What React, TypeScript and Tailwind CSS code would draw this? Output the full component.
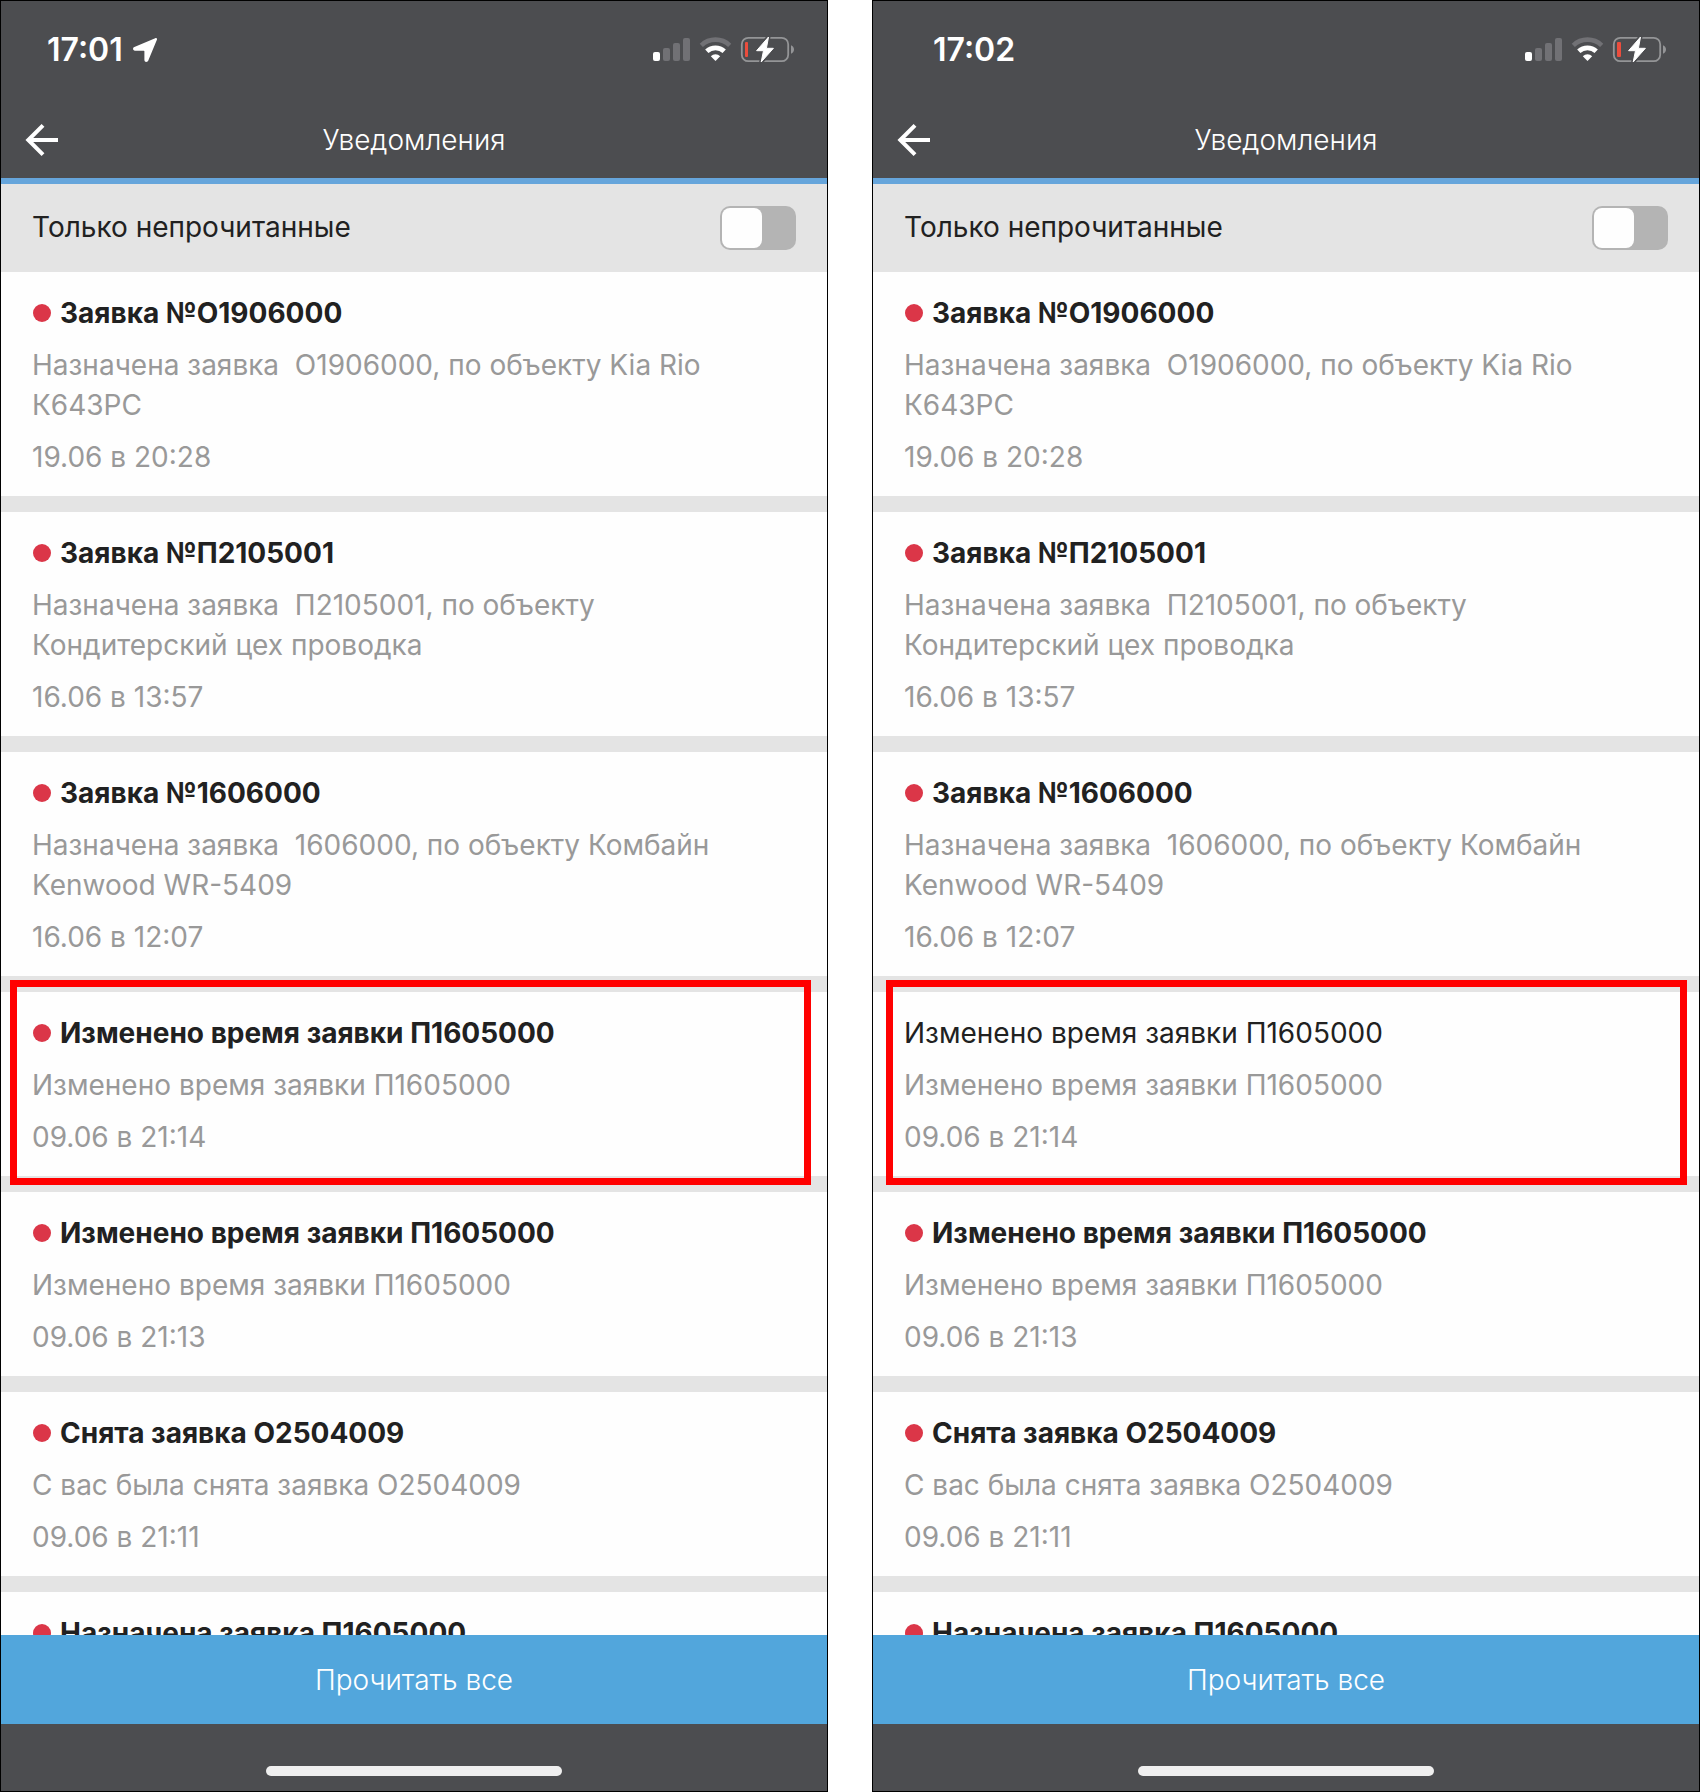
type Notice = { title: string; body?: string; time?: string; read?: boolean; marked?: boolean };

const NOTICES: Notice[] = [
  { title: 'Заявка №О1906000', body: 'Назначена заявка  О1906000, по объекту Kia Rio К643РС', time: '19.06 в 20:28' },
  { title: 'Заявка №П2105001', body: 'Назначена заявка  П2105001, по объекту Кондитерский цех проводка', time: '16.06 в 13:57' },
  { title: 'Заявка №1606000', body: 'Назначена заявка  1606000, по объекту Комбайн Kenwood WR-5409', time: '16.06 в 12:07' },
  { title: 'Изменено время заявки П1605000', body: 'Изменено время заявки П1605000', time: '09.06 в 21:14', marked: true },
  { title: 'Изменено время заявки П1605000', body: 'Изменено время заявки П1605000', time: '09.06 в 21:13' },
  { title: 'Снята заявка О2504009', body: 'С вас была снята заявка О2504009', time: '09.06 в 21:11' },
  { title: 'Назначена заявка П1605000' },
];

const NOTICES_AFTER: Notice[] = NOTICES.map((n) => (n.marked ? { ...n, read: true } : n));

function StatusIcons({ charge }: { charge: number }) {
  return (
    <svg width="141" height="28" viewBox="0 0 141 28" fill="none" aria-hidden="true">
      <rect x="0" y="16" width="7" height="9" rx="2" fill="#fff" />
      <rect x="10" y="12" width="7" height="13" rx="2" fill="#717175" />
      <rect x="20" y="7" width="7" height="18" rx="2" fill="#717175" />
      <rect x="30" y="2" width="7" height="23" rx="2" fill="#717175" />
      <path d="M48.3 9.3A20.500 20.500 0 0 1 76.700 9.3" stroke="#717175" strokeWidth="4.6" />
      <path d="M53.800 15.3A12.800 12.800 0 0 1 71.200 15.3" stroke="#fff" strokeWidth="4.8" />
      <path d="M62.500 25L57.800 20.200A6.800 6.800 0 0 1 67.200 20.200Z" fill="#fff" />
      <rect x="88.800" y="1.800" width="46.400" height="23.400" rx="6.500" stroke="#949597" strokeWidth="1.8" />
      <path d="M138 9.300C140 10 141 11.700 141 13.500S140 17 138 17.700Z" fill="#949597" />
      <rect x="92" y="6" width={charge} height="15" rx="1" fill="#eb4d3d" />
      <path
        d="M115.500 1L103.600 14.700H110.500L108.200 26L120.400 12.300H113.400Z"
        fill="#fff" stroke="#4c4d50" strokeWidth="4" strokeLinejoin="round"
      />
      <path
        d="M115.500 1L103.600 14.700H110.500L108.200 26L120.400 12.300H113.400Z"
        fill="#fff" stroke="#fff" strokeWidth="1" strokeLinejoin="round"
      />
    </svg>
  );
}

function LocationArrow() {
  return (
    <svg width="24" height="24" viewBox="0 0 24 24" fill="#fff" aria-hidden="true">
      <path d="M22.200 0.200C23.500 -0.300 24.400 0.700 23.800 2L15.300 22.500C14.400 24.700 11.400 24.300 11.400 22V13.300Q11.400 12.700 10.800 12.700H2C-0.300 12.700 -0.700 9.800 1.400 8.900Z" />
    </svg>
  );
}

function NoticeCard({ notice, highlight }: { notice: Notice; highlight: string }) {
  return (
    <li className="relative bg-[#fefefe] px-[31px] pt-[21px] pb-[19px]">
      <article className="flex flex-col gap-3">
        <div className="flex items-center gap-2">
          {!notice.read && (
            <span className="flex w-5 shrink-0 justify-center">
              <span className="size-[18px] rounded-full bg-[#db3648]" />
            </span>
          )}
          <h2 className={notice.read ? 'font-normal text-[#212121]' : 'font-bold text-[#212121]'}>{notice.title}</h2>
        </div>
        {notice.body && <p className="whitespace-pre-wrap pr-8 text-[#999999]">{notice.body}</p>}
        {notice.time && <p className="text-[#999999]">{notice.time}</p>}
      </article>
      {notice.marked && (
        <div className={`pointer-events-none absolute -top-3 -bottom-[9px] z-10 border-7 border-[#ff0000] ${highlight}`} />
      )}
    </li>
  );
}

type PhoneProps = { id: string; clock: string; located?: boolean; charge: number; notices: Notice[]; highlight: string };

function Phone({ id, clock, located, charge, notices, highlight }: PhoneProps) {
  return (
    <section className="flex min-h-0 min-w-0 flex-col border border-black bg-[#4c4d50] text-[28px] leading-10">
      <div className={`flex h-[97px] shrink-0 items-center justify-between pr-[33px] ${located ? 'pl-[46px]' : 'pl-15'}`}>
        <div className="flex items-center gap-2.5 text-[32px] font-semibold text-white">
          <span>{clock}</span>
          {located && <LocationArrow />}
        </div>
        <StatusIcons charge={charge} />
      </div>
      <header className="grid h-[86px] shrink-0 grid-cols-[80px_1fr_80px] items-center border-b-6 border-[#66a5db] pt-1 text-white">
        <button type="button" aria-label="Назад" className="flex h-full items-center pl-6">
          <svg width="34" height="34" viewBox="0 0 34 34" fill="none" stroke="#fff" strokeWidth="4" aria-hidden="true">
            <path d="M33 17H4M18 2.300L3.300 17L18 31.700" />
          </svg>
        </button>
        <h1 className="text-center font-light">Уведомления</h1>
      </header>
      <div className="flex h-22 shrink-0 items-center justify-between bg-[#e4e4e4] px-[31px]">
        <label htmlFor={id} className="mb-0.5 text-[#212121]">
          Только непрочитанные
        </label>
        <input
          id={id}
          type="checkbox"
          role="switch"
          className="h-11 w-19 appearance-none rounded-[10px] bg-[#b4b4b4] p-0.5 before:block before:size-10 before:rounded-lg before:bg-[#fefefe] checked:bg-[#52a6dc] checked:before:translate-x-8"
        />
      </div>
      <ul className="flex min-h-0 flex-1 flex-col gap-4 overflow-hidden bg-[#e4e4e4]">
        {notices.map((n, i) => (
          <NoticeCard key={i} notice={n} highlight={highlight} />
        ))}
      </ul>
      <button type="button" className="h-[89px] shrink-0 bg-[#52a6dc] font-light text-white">
        Прочитать все
      </button>
      <div className="flex h-[67px] shrink-0 items-end justify-center pb-[15px]">
        <span className="h-2.5 w-74 rounded-full bg-[#efefef]" />
      </div>
    </section>
  );
}

export default function App() {
  return (
    <main className="grid h-screen grid-cols-2 grid-rows-1 gap-11 bg-white font-['Inter',sans-serif]">
      <Phone id="unread-before" clock="17:01" located charge={3} notices={NOTICES} highlight="left-[9px] right-4" />
      <Phone id="unread-after" clock="17:02" charge={4} notices={NOTICES_AFTER} highlight="left-[13px] right-3" />
    </main>
  );
}
